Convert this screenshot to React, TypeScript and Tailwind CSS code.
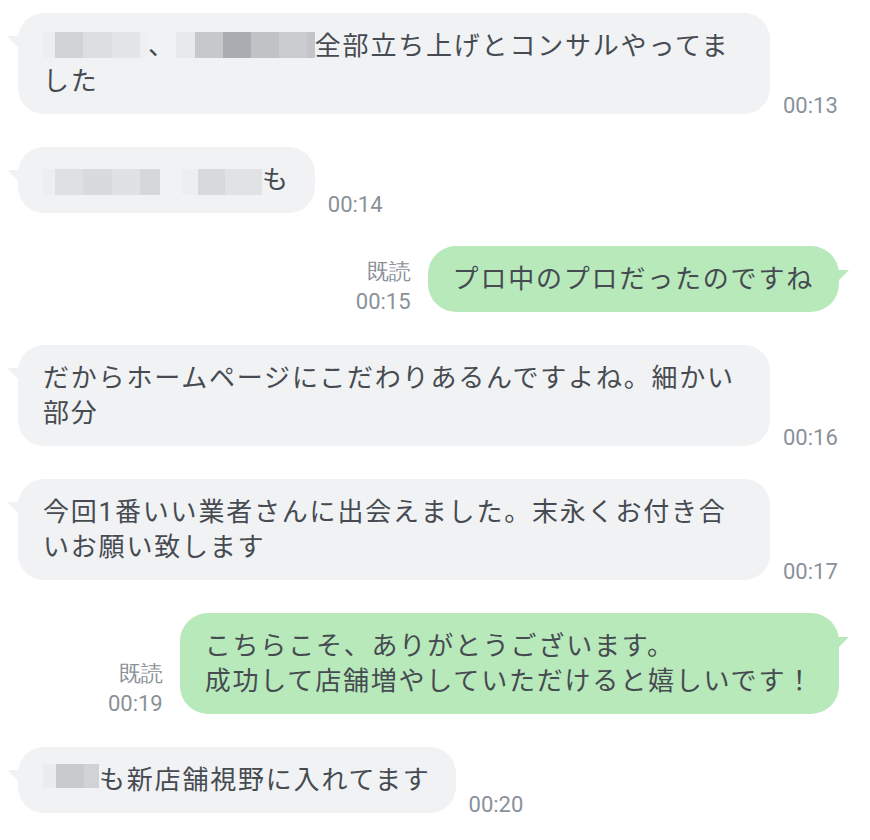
import type { ReactNode } from "react"

// redaction blocks (pixelated blur) drawn as plain inline boxes
type Blk = { w: number; c: string }

function Mosaic({ blocks, h = 26, lift = 3 }: { blocks: Blk[]; h?: number; lift?: number }) {
  return (
    <span className="inline-flex align-middle relative" style={{ top: -lift }}>
      {blocks.map((b, i) => (
        <span key={i} className="inline-block" style={{ width: b.w, height: h, background: b.c }} />
      ))}
    </span>
  )
}

function LeftTail() {
  return (
    <svg className="absolute left-[-11px] top-[23px]" width="13" height="13" viewBox="0 0 13 13">
      <polygon points="0,0 13,0 13,13" fill="#f1f2f4" />
    </svg>
  )
}

function RightTail() {
  return (
    <svg className="absolute right-[-10px] top-[24px]" width="13" height="13" viewBox="0 0 13 13">
      <polygon points="0,0 13,0 0,13" fill="#b8e9bb" />
    </svg>
  )
}

function Time({ children }: { children: ReactNode }) {
  return (
    <span className="relative top-[3px] font-['Roboto',sans-serif] text-[22px] leading-[22px] text-[#8a9199] whitespace-nowrap">
      {children}
    </span>
  )
}

const bubbleText =
  "font-['Roboto','Noto_Sans_CJK_JP',sans-serif] text-[26px] leading-[35px] tracking-[1.8px] text-[#464b51] whitespace-nowrap"

function Incoming({ children, time, width }: { children: ReactNode; time: string; width?: string }) {
  return (
    <div className="flex items-end pl-[18px]">
      <div
        className={`relative bg-[#f1f2f4] rounded-[26px] px-[25px] pt-[16px] pb-[15px] ${bubbleText} ${width ?? ""}`}
      >
        <LeftTail />
        {children}
      </div>
      <div className="ml-[13px] flex">
        <Time>{time}</Time>
      </div>
    </div>
  )
}

function Outgoing({ children, time }: { children: ReactNode; time: string }) {
  return (
    <div className="flex items-end justify-end pr-[31px]">
      <div className="relative top-[-2px] flex flex-col items-end gap-[8px] mr-[17px]">
        <Time>既読</Time>
        <Time>{time}</Time>
      </div>
      <div className={`relative bg-[#b8e9bb] rounded-[28px] px-[25px] pt-[16px] pb-[15px] ${bubbleText}`}>
        <RightTail />
        {children}
      </div>
    </div>
  )
}

export default function App() {
  return (
    <div className="w-[870px] h-[840px] bg-white overflow-hidden pt-[13px] flex flex-col gap-[33px]">
      <Incoming time="00:13" width="w-[752px]">
        <Mosaic
          blocks={[
            { w: 12, c: "#eceef0" },
            { w: 28, c: "#d1d3d6" },
            { w: 29, c: "#dddee1" },
            { w: 28, c: "#e4e5e7" },
            { w: 8, c: "#eeeff1" },
          ]}
        />
        <span>、</span>
        <Mosaic
          blocks={[
            { w: 19, c: "#e8e9eb" },
            { w: 28, c: "#c6c8cb" },
            { w: 28, c: "#a9acb0" },
            { w: 28, c: "#c0c2c5" },
            { w: 28, c: "#c9cbce" },
            { w: 8, c: "#c3c5c8" },
          ]}
        />
        全部立ち上げとコンサルやってま
        <br />
        した
      </Incoming>

      <Incoming time="00:14">
        <Mosaic
          lift={0}
          blocks={[
            { w: 12, c: "#eceef0" },
            { w: 28, c: "#dfe0e3" },
            { w: 29, c: "#d8dadd" },
            { w: 28, c: "#e0e1e3" },
            { w: 20, c: "#d5d7da" },
            { w: 22, c: "#f1f2f4" },
            { w: 16, c: "#eceef0" },
            { w: 27, c: "#d7d9dc" },
            { w: 37, c: "#e0e2e4" },
          ]}
        />
        も
      </Incoming>

      <Outgoing time="00:15">プロ中のプロだったのですね</Outgoing>

      <Incoming time="00:16" width="w-[752px]">
        だからホームページにこだわりあるんですよね。細かい
        <br />
        部分
      </Incoming>

      <Incoming time="00:17" width="w-[752px]">
        今回1番いい業者さんに出会えました。末永くお付き合
        <br />
        いお願い致します
      </Incoming>

      <Outgoing time="00:19">
        こちらこそ、ありがとうございます。
        <br />
        成功して店舗増やしていただけると嬉しいです！
      </Outgoing>

      <Incoming time="00:20">
        <Mosaic
          h={24}
          lift={6}
          blocks={[
            { w: 13, c: "#ebecee" },
            { w: 28, c: "#c8cacd" },
            { w: 15, c: "#d0d2d5" },
          ]}
        />
        も新店舗視野に入れてます
      </Incoming>
    </div>
  )
}
